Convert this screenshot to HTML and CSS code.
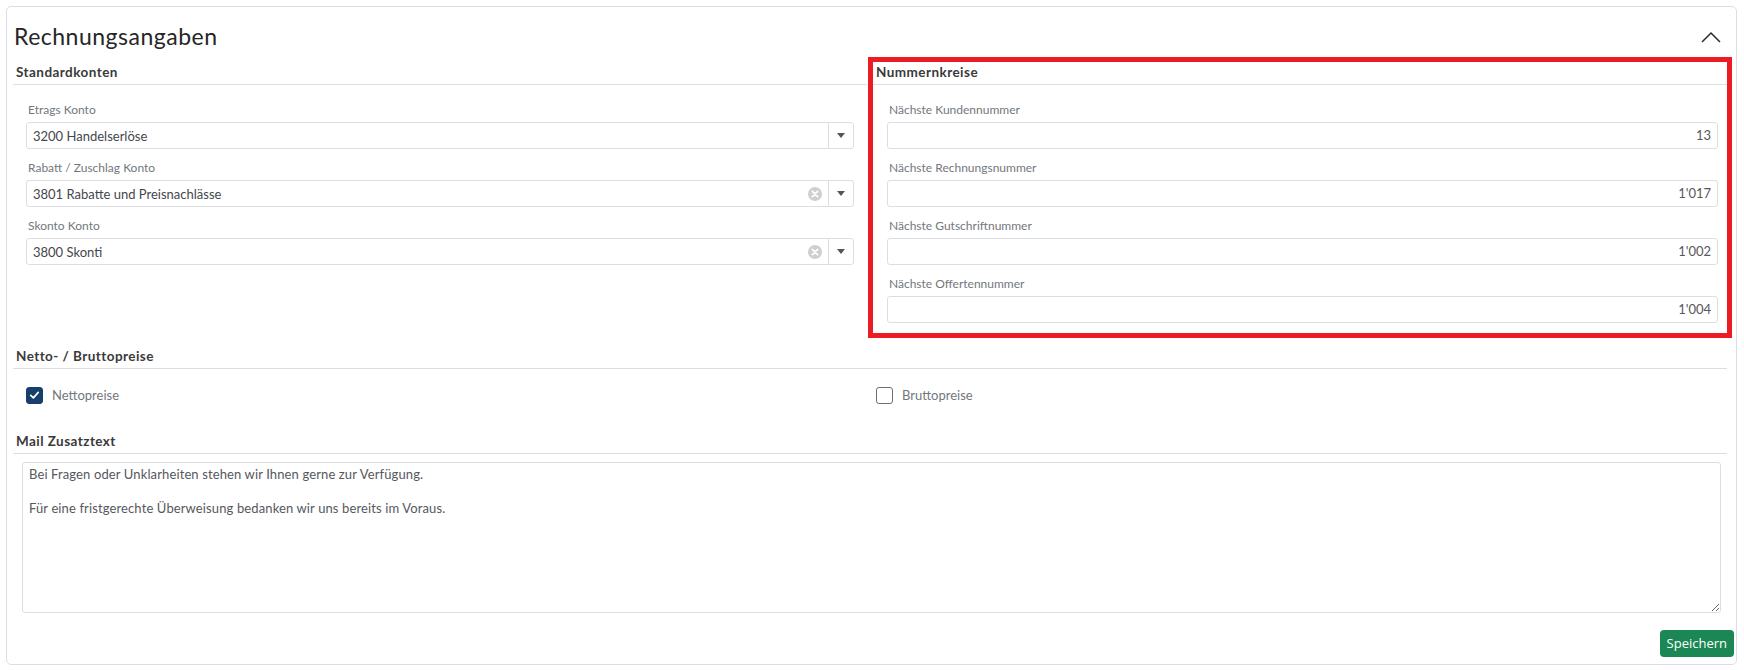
FILE: index.html
```html
<!DOCTYPE html>
<html lang="de">
<head>
<meta charset="utf-8">
<title>Rechnungsangaben</title>
<link rel="stylesheet" href="styles.css">
</head>
<body>
<div class="card">
  <div class="card-head">
    <h2 class="title">Rechnungsangaben</h2>
    <svg class="chevron" width="20" height="12" viewBox="0 0 20 12"><polyline points="1,11 10,2 19,11" fill="none" stroke="#2b2b2b" stroke-width="1.5"/></svg>
  </div>

  <div class="grid">
    <section class="col col-left">
      <h3 class="sec-head">Standardkonten</h3>
      <div class="fields">
        <div class="group">
          <div class="lbl">Etrags Konto</div>
          <div class="select">
            <span class="sel-val">3200 Handelserlöse</span>
            <span class="sel-arrow"><i class="tri"></i></span>
          </div>
        </div>
        <div class="group">
          <div class="lbl">Rabatt / Zuschlag Konto</div>
          <div class="select">
            <span class="sel-val">3801 Rabatte und Preisnachlässe</span>
            <svg class="clear" width="14" height="14" viewBox="0 0 14 14"><circle cx="7" cy="7" r="7" fill="#cfcfcf"/><path d="M4.4 4.4 L9.6 9.6 M9.6 4.4 L4.4 9.6" stroke="#fff" stroke-width="1.8" stroke-linecap="round"/></svg>
            <span class="sel-arrow"><i class="tri"></i></span>
          </div>
        </div>
        <div class="group">
          <div class="lbl">Skonto Konto</div>
          <div class="select">
            <span class="sel-val">3800 Skonti</span>
            <svg class="clear" width="14" height="14" viewBox="0 0 14 14"><circle cx="7" cy="7" r="7" fill="#cfcfcf"/><path d="M4.4 4.4 L9.6 9.6 M9.6 4.4 L4.4 9.6" stroke="#fff" stroke-width="1.8" stroke-linecap="round"/></svg>
            <span class="sel-arrow"><i class="tri"></i></span>
          </div>
        </div>
      </div>
    </section>

    <section class="col col-right col-marked">
      <h3 class="sec-head">Nummernkreise</h3>
      <div class="fields">
        <div class="group">
          <div class="lbl">Nächste Kundennummer</div>
          <div class="num">13</div>
        </div>
        <div class="group">
          <div class="lbl">Nächste Rechnungsnummer</div>
          <div class="num">1'017</div>
        </div>
        <div class="group">
          <div class="lbl">Nächste Gutschriftnummer</div>
          <div class="num">1'002</div>
        </div>
        <div class="group">
          <div class="lbl">Nächste Offertennummer</div>
          <div class="num">1'004</div>
        </div>
      </div>
    </section>
  </div>

  <section class="block block-prices">
    <h3 class="sec-head">Netto- / Bruttopreise</h3>
    <div class="checks">
      <div class="check check-left">
        <span class="box box-on"><svg width="16" height="16" viewBox="0 0 16 16"><path d="M4 8.3 L6.8 11 L12 5.2" fill="none" stroke="#fff" stroke-width="1.8" stroke-linecap="round" stroke-linejoin="round"/></svg></span>
        <span class="check-lbl">Nettopreise</span>
      </div>
      <div class="check check-right">
        <span class="box"></span>
        <span class="check-lbl">Bruttopreise</span>
      </div>
    </div>
  </section>

  <section class="block block-mail">
    <h3 class="sec-head">Mail Zusatztext</h3>
    <textarea class="mail-text">Bei Fragen oder Unklarheiten stehen wir Ihnen gerne zur Verfügung.

Für eine fristgerechte Überweisung bedanken wir uns bereits im Voraus.</textarea>
  </section>

  <div class="footer">
    <button class="btn-save" type="button">Speichern</button>
  </div>
</div>
</body>
</html>
```

FILE: styles.css
```css
* { box-sizing: border-box; }

html, body {
  margin: 0;
  padding: 0;
  background: #ffffff;
}

body {
  font-family: Lato, "Open Sans", "Noto Sans", sans-serif;
  color: #333;
}

.card {
  margin: 6px 0 0 6px;
  width: 1731px;
  height: 659px;
  border: 1px solid #dcdee3;
  border-radius: 5px;
  padding: 0 4px 7px 6px;
  display: flex;
  flex-direction: column;
}

.card-head {
  height: 55px;
  display: flex;
  justify-content: space-between;
  align-items: flex-start;
}

.title {
  margin: 0;
  padding-top: 16px;
  padding-left: 1px;
  font-size: 23px;
  line-height: 26px;
  font-weight: 400;
  letter-spacing: 0.5px;
  color: #262626;
}

.chevron {
  margin-top: 24px;
  margin-right: 11px;
}

.grid {
  display: grid;
  grid-template-columns: 854px 854px;
  column-gap: 6px;
  margin-right: 5px;
}

.col-marked {
  outline: 5px solid #ec1c24;
}

.sec-head {
  margin: 0;
  font-size: 13.5px;
  line-height: 20px;
  font-weight: 700;
  letter-spacing: 0.45px;
  color: #3a3a3a;
  padding: 0 0 2px 3px;
  border-bottom: 1px solid #dcdee3;
}

.fields {
  padding-top: 16px;
}

.col-left .fields { padding-left: 13px; padding-right: 13px; }
.col-right .fields { padding-left: 14px; padding-right: 9px; }

.group {
  margin-bottom: 10px;
}

.lbl {
  font-size: 12px;
  line-height: 18px;
  margin-bottom: 3px;
  padding-left: 2px;
  color: #73777d;
}

.select {
  height: 27px;
  border: 1px solid #dcdee3;
  border-radius: 3px;
  display: flex;
  align-items: center;
}

.sel-val {
  flex: 1;
  padding-left: 6px;
  font-size: 13px;
  color: #44474c;
  white-space: nowrap;
}

.clear {
  margin-right: 6px;
}

.sel-arrow {
  width: 25px;
  height: 100%;
  border-left: 1px solid #dcdee3;
  display: flex;
  align-items: center;
  justify-content: center;
}

.tri {
  width: 0;
  height: 0;
  border-left: 4.5px solid transparent;
  border-right: 4.5px solid transparent;
  border-top: 5px solid #555;
}

.num {
  height: 27px;
  border: 1px solid #dcdee3;
  border-radius: 3px;
  text-align: right;
  padding-right: 6px;
  font-size: 13px;
  line-height: 25px;
  color: #55585d;
}

.block {
  margin-right: 5px;
}

.block-prices {
  margin-top: 13px;
}

.checks {
  display: grid;
  grid-template-columns: 852px 856px;
  column-gap: 6px;
  padding-top: 18px;
}

.check {
  display: flex;
  align-items: center;
  height: 16px;
}

.check-left { padding-left: 13px; }
.check-right { padding-left: 5px; }

.box {
  width: 17px;
  height: 17px;
  border: 1px solid #6f6f6f;
  border-radius: 3px;
  margin-right: 9px;
  display: flex;
  align-items: center;
  justify-content: center;
}

.box-on {
  background: #173f6c;
  border-color: #173f6c;
}

.check-lbl {
  font-size: 13px;
  color: #73777d;
}

.block-mail {
  margin-top: 28px;
}

.mail-text {
  display: block;
  margin: 8px 6px 0 9px;
  width: calc(100% - 15px);
  height: 151px;
  border: 1px solid #dcdee3;
  border-radius: 3px;
  padding: 3px 6px;
  font-family: Lato, "Open Sans", "Noto Sans", sans-serif;
  font-size: 13px;
  letter-spacing: 0.12px;
  line-height: 17px;
  color: #55585d;
  background: #fff;
  resize: vertical;
  outline: none;
}

.footer {
  margin-top: 17px;
  margin-right: -2px;
  display: flex;
  justify-content: flex-end;
}

.btn-save {
  height: 27px;
  padding: 0 7px;
  border: none;
  border-radius: 4px;
  background: #1a8754;
  color: #fff;
  font-family: "Open Sans", Lato, sans-serif;
  font-size: 13px;
  line-height: 27px;
}
```
